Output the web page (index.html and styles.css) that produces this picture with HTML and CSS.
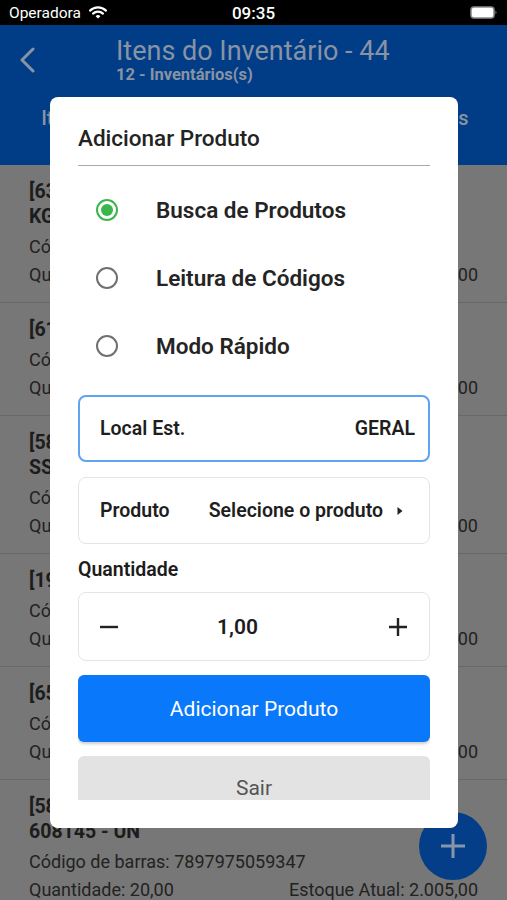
FILE: index.html
```html
<!DOCTYPE html>
<html lang="pt-BR">
<head>
    <meta charset="UTF-8">
    <meta name="viewport" content="width=device-width, initial-scale=1.0">
    <title>Itens do Inventário</title>
    <link rel="stylesheet" href="styles.css">
</head>
<body>
    <div class="status-bar">
        <div class="status-left">
            <span>Operadora</span>
            <svg class="wifi" width="18" height="13" viewBox="0 0 18 13">
                <path d="M1 4.6 A11.5 11.5 0 0 1 17 4.6" fill="none" stroke="#fff" stroke-width="2.2" stroke-linecap="round"/>
                <path d="M4 7.6 A7.2 7.2 0 0 1 14 7.6" fill="none" stroke="#fff" stroke-width="2.2" stroke-linecap="round"/>
                <path d="M9 12.6 L6.6 10.2 A3.4 3.4 0 0 1 11.4 10.2 Z" fill="#fff"/>
            </svg>
        </div>
        <div class="status-time">09:35</div>
        <div class="status-right">
            <svg width="28" height="13" viewBox="0 0 28 13">
                <rect x="1" y="1" width="23" height="11" rx="3" fill="#fff" stroke="#8a8a8a" stroke-width="1.5"/>
                <path d="M25.5 4.5 Q27.5 6.5 25.5 8.5 Z" fill="#8a8a8a"/>
            </svg>
        </div>
    </div>

    <header class="app-header">
        <div class="nav-row">
            <svg class="back" width="20" height="26" viewBox="0 0 20 26">
                <polyline points="15,2 4,13 15,24" fill="none" stroke="#8893a4" stroke-width="3" stroke-linecap="round" stroke-linejoin="round"/>
            </svg>
            <div class="nav-titles">
                <div class="nav-title">Itens do Inventário - 44</div>
                <div class="nav-subtitle">12 - Inventários(s)</div>
            </div>
        </div>
        <div class="tabs">
            <div class="tab">Itens Inventariados</div>
            <div class="tab">Itens Não Contados</div>
        </div>
    </header>

    <ul class="item-list">
        <li class="item">
            <div class="item-title">[6345] ACHOCOLATADO EM PÓ NESCAU 400G - KG</div>
            <div class="item-line">Código de barras: 7891000100103</div>
            <div class="item-line split"><span>Quantidade: 12,00</span><span>Estoque Atual: 340,00</span></div>
        </li>
        <li class="item">
            <div class="item-title">[6127] ARROZ TIPO 1 5KG - UN</div>
            <div class="item-line">Código de barras: 7896006711117</div>
            <div class="item-line split"><span>Quantidade: 8,00</span><span>Estoque Atual: 120,00</span></div>
        </li>
        <li class="item">
            <div class="item-title">[5834] SABONETE LÍQUIDO PROTEX (1000 ML) SSB - UN</div>
            <div class="item-line">Código de barras: 7891024134702</div>
            <div class="item-line split"><span>Quantidade: 6,00</span><span>Estoque Atual: 75,00</span></div>
        </li>
        <li class="item">
            <div class="item-title">[1902] FEIJÃO CARIOCA 1KG - UN</div>
            <div class="item-line">Código de barras: 7896102501872</div>
            <div class="item-line split"><span>Quantidade: 10,00</span><span>Estoque Atual: 410,00</span></div>
        </li>
        <li class="item">
            <div class="item-title">[6512] ÓLEO DE SOJA 900ML - UN</div>
            <div class="item-line">Código de barras: 7891107101621</div>
            <div class="item-line split"><span>Quantidade: 24,00</span><span>Estoque Atual: 980,00</span></div>
        </li>
        <li class="item">
            <div class="item-title">[5813] DETERGENTE NEUTRO LIMPOL 500ML 608145 - UN</div>
            <div class="item-line">Código de barras: 7897975059347</div>
            <div class="item-line split"><span>Quantidade: 20,00</span><span>Estoque Atual: 2.005,00</span></div>
        </li>
    </ul>

    <button class="fab">
        <svg width="26" height="26" viewBox="0 0 26 26">
            <path d="M13 1 V25 M1 13 H25" stroke="#8795aa" stroke-width="3"/>
        </svg>
    </button>

    <div class="modal">
        <div class="modal-scroll">
            <h2 class="modal-title">Adicionar Produto</h2>

            <div class="radio-group">
                <div class="radio-row">
                    <span class="radio checked"></span>
                    <span class="radio-label">Busca de Produtos</span>
                </div>
                <div class="radio-row">
                    <span class="radio"></span>
                    <span class="radio-label">Leitura de Códigos</span>
                </div>
                <div class="radio-row">
                    <span class="radio"></span>
                    <span class="radio-label">Modo Rápido</span>
                </div>
            </div>

            <div class="field field-active">
                <span class="field-label">Local Est.</span>
                <span class="field-value">GERAL</span>
            </div>

            <div class="field">
                <span class="field-label">Produto</span>
                <span class="field-value">Selecione o produto</span>
                <svg class="caret" width="6" height="10" viewBox="0 0 6 10">
                    <path d="M0.5 1 L5.5 5 L0.5 9 Z" fill="#222"/>
                </svg>
            </div>

            <div class="qty-label">Quantidade</div>
            <div class="qty-box">
                <svg class="qty-btn" width="18" height="18" viewBox="0 0 18 18">
                    <path d="M0 9 H18" stroke="#222" stroke-width="2.4"/>
                </svg>
                <span class="qty-value">1,00</span>
                <svg class="qty-btn" width="18" height="18" viewBox="0 0 18 18">
                    <path d="M0 9 H18 M9 0 V18" stroke="#222" stroke-width="2.4"/>
                </svg>
            </div>

            <button class="btn btn-primary">Adicionar Produto</button>
            <button class="btn btn-secondary">Sair</button>
        </div>
    </div>
</body>
</html>
```

FILE: styles.css
```css
body {
    margin: 0;
    width: 507px;
    height: 900px;
    overflow: hidden;
    position: relative;
    font-family: Roboto, 'Noto Sans', sans-serif;
    background: #777777;
    color: #1c1c1c;
}

/* barra de status */
.status-bar {
    height: 25px;
    background: #000;
    color: #fff;
    display: flex;
    align-items: center;
    justify-content: space-between;
    padding: 0 9px;
    font-size: 15.5px;
    position: relative;
}

.status-left {
    display: flex;
    align-items: center;
    gap: 8px;
}

.status-time {
    position: absolute;
    left: 0;
    right: 0;
    text-align: center;
    font-size: 17px;
    font-weight: 500;
    pointer-events: none;
}

.status-right svg {
    display: block;
}

/* cabeçalho */
.app-header {
    background: #013d87;
    color: #8893a4;
    height: 140px;
}

.nav-row {
    display: flex;
    align-items: flex-start;
    height: 65px;
    padding-left: 18px;
}

.back {
    margin-top: 22px;
}

.nav-titles {
    margin-left: 78px;
    padding-top: 10px;
}

.nav-title {
    font-size: 27px;
    line-height: 32px;
}

.nav-subtitle {
    font-size: 16.5px;
    font-weight: 700;
    line-height: 16px;
}

.tabs {
    display: flex;
    padding-top: 16px;
}

.tab {
    flex: 1;
    text-align: center;
    font-size: 20px;
    font-weight: 500;
    line-height: 24px;
}

/* lista de itens */
.item-list {
    list-style: none;
    margin: 0;
    padding: 0;
}

.item {
    padding: 14px 29px 13px;
    border-bottom: 1px solid #686868;
}

.item-title {
    font-size: 19.5px;
    font-weight: 700;
    line-height: 25px;
    margin-bottom: 4px;
}

.item-line {
    font-size: 18px;
    line-height: 28px;
    color: #222;
}

.split {
    display: flex;
    justify-content: space-between;
}

.fab {
    position: absolute;
    left: 419px;
    top: 812px;
    width: 68px;
    height: 68px;
    border-radius: 50%;
    border: none;
    background: #053e88;
    display: flex;
    align-items: center;
    justify-content: center;
    padding: 0;
}

/* modal */
.modal {
    position: absolute;
    left: 50px;
    top: 97px;
    width: 408px;
    box-sizing: border-box;
    padding: 28px;
    background: #fff;
    border-radius: 8px;
}

.modal-scroll {
    height: 675px;
    overflow: hidden;
}

.modal-title {
    margin: 0;
    font-size: 22.5px;
    font-weight: 500;
    line-height: 26px;
    color: #232323;
    padding-bottom: 14px;
    border-bottom: 1.5px solid #aaaaaa;
}

.radio-group {
    margin-top: 10px;
}

.radio-row {
    height: 68px;
    display: flex;
    align-items: center;
    padding-left: 18px;
}

.radio {
    width: 22px;
    height: 22px;
    box-sizing: border-box;
    border-radius: 50%;
    border: 2px solid #707070;
    display: flex;
    align-items: center;
    justify-content: center;
}

.radio.checked {
    border-color: #3cb54c;
}

.radio.checked::after {
    content: '';
    width: 12px;
    height: 12px;
    border-radius: 50%;
    background: #3cb54c;
}

.radio-label {
    margin-left: 38px;
    font-size: 22.5px;
    font-weight: 600;
    color: #242424;
}

.field {
    margin-top: 15px;
    height: 67px;
    box-sizing: border-box;
    border: 1px solid #e4e4e4;
    border-radius: 8px;
    display: flex;
    align-items: center;
    padding: 0 14px 0 21px;
    font-size: 19.5px;
    font-weight: 600;
    color: #1e1e1e;
}

.field-active {
    border: 2px solid #5ea4f0;
    padding-left: 20px;
    padding-right: 13px;
}

.field-label {
    width: 108px;
}

.field-value {
    margin-left: auto;
}

.caret {
    margin: 0 12px 0 14px;
}

.qty-label {
    margin-top: 14px;
    font-size: 19.5px;
    font-weight: 600;
    line-height: 24px;
    margin-bottom: 10px;
}

.qty-box {
    height: 69px;
    box-sizing: border-box;
    border: 1px solid #e4e4e4;
    border-radius: 8px;
    display: flex;
    align-items: center;
    padding: 0 22px 0 21px;
}

.qty-value {
    flex: 1;
    text-align: center;
    padding-right: 32px;
    font-size: 21px;
    font-weight: 600;
}

.btn {
    display: block;
    width: 100%;
    height: 67px;
    border: none;
    border-radius: 6px;
    font-family: inherit;
    font-size: 21px;
    margin-top: 14px;
}

.btn-primary {
    background: #0a78fb;
    color: #fff;
    box-shadow: 0 2px 3px rgba(0, 0, 0, 0.2);
}

.btn-secondary {
    background: #e3e3e3;
    color: #555;
    padding-bottom: 4px;
}
```
